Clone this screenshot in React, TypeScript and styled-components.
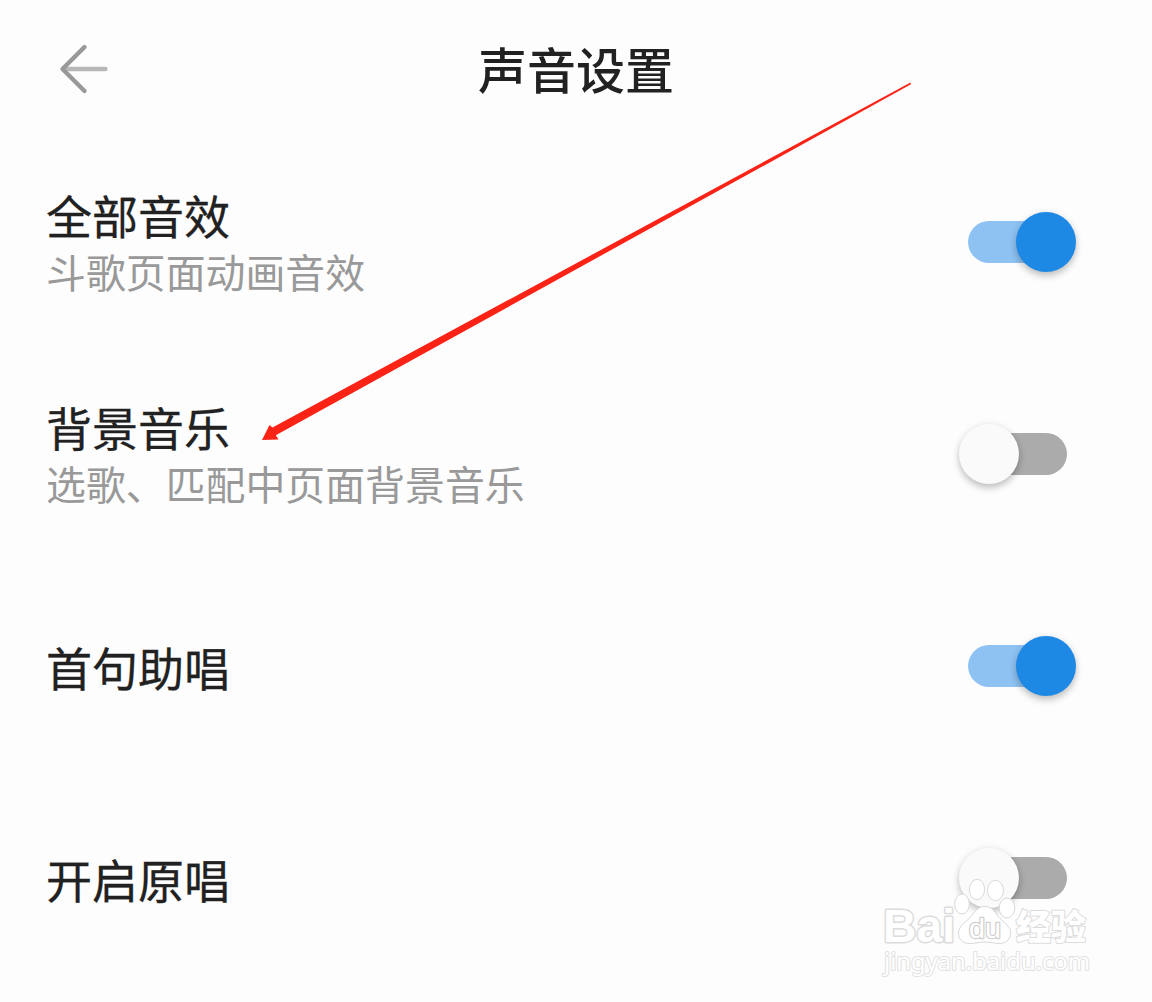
import { useState } from 'react';
import styled, { createGlobalStyle } from 'styled-components';

const GlobalStyle = createGlobalStyle`
  body {
    background: #fdfdfd;
    font-family: 'Noto Sans CJK SC', sans-serif;
    margin: 0;
  }
`;

const Page = styled.main`
  box-sizing: border-box;
  height: 1002px;
  overflow: hidden;
  position: relative;
  width: 1152px;
`;

const Header = styled.header`
  align-items: center;
  display: grid;
  grid-template-columns: 160px 1fr 160px;
  height: 136px;
`;

const BackButton = styled.button`
  background: none;
  border: 0;
  height: 60px;
  justify-self: start;
  margin: 0 0 0 54px;
  padding: 0;
  width: 60px;
`;

const Title = styled.h1`
  color: #212121;
  font-size: 49px;
  font-weight: 500;
  line-height: 72px;
  margin: 0;
  text-align: center;
`;

const Row = styled.section`
  align-items: center;
  box-sizing: border-box;
  display: flex;
  height: 212px;
  justify-content: space-between;
  padding: 0 76px 0 46px;
`;

const Labels = styled.div`
  display: flex;
  flex-direction: column;
  gap: 2px;
`;

const Name = styled.div`
  color: #212121;
  font-size: 46px;
  font-weight: 400;
  line-height: 56px;
  -webkit-text-stroke: 0.3px #212121;
`;

const Hint = styled.div`
  color: #999;
  font-size: 39.9px;
  line-height: 54px;
`;

const Track = styled.button<{ $on: boolean }>`
  align-items: center;
  background: ${(p) => (p.$on ? '#8ec2f2' : '#ababab')};
  border: 0;
  border-radius: 21px;
  display: flex;
  height: 42px;
  justify-content: ${(p) => (p.$on ? 'flex-end' : 'flex-start')};
  margin: 0 9px;
  padding: 0;
  width: 99px;
`;

const Thumb = styled.span<{ $on: boolean }>`
  background: ${(p) => (p.$on ? '#1e88e5' : '#fafafa')};
  border-radius: 50%;
  box-shadow: 0 4px 7px rgba(0, 0, 0, 0.22), 0 0 8px rgba(0, 0, 0, 0.06);
  flex: none;
  height: 60px;
  margin: 0 -9px;
  width: 60px;
`;

const Pointer = styled.svg`
  left: 0;
  pointer-events: none;
  position: absolute;
  top: 0;
`;

const Watermark = styled.svg`
  left: 876px;
  pointer-events: none;
  position: absolute;
  top: 870px;
`;

interface ISetting {
  enabled: boolean;
  hint?: string;
  name: string;
}

const initialSettings: ISetting[] = [
  { name: '全部音效', hint: '斗歌页面动画音效', enabled: true },
  { name: '背景音乐', hint: '选歌、匹配中页面背景音乐', enabled: false },
  { name: '首句助唱', enabled: true },
  { name: '开启原唱', enabled: false },
];

const BackIcon = () => (
  <svg width="60" height="60" viewBox="0 0 60 60" fill="none" strokeLinecap="round" strokeWidth="4.4">
    <path d="M10 31H51.5" stroke="#b8b8b8" />
    <path d="M30.5 9 8.5 31l22 22" stroke="#999" strokeLinejoin="round" />
  </svg>
);

const BaiduMark = () => (
  <Watermark width="230" height="115" viewBox="0 0 230 115">
    <g fill="#fff" stroke="#d8d8d8" strokeWidth="1">
      <ellipse cx="101" cy="19.5" rx="7.6" ry="10.2" />
      <ellipse cx="119.5" cy="20.5" rx="8" ry="10.2" />
      <ellipse cx="86" cy="34" rx="7.4" ry="10" />
      <ellipse cx="131" cy="38" rx="7.8" ry="10" />
      <path d="M109 36.5c-8 0-11 7-16 12-5 5-10.500 8-10.500 14.500 0 7 5 10.500 11 10.500 6 0 9-1.500 15.500-1.500s9 1.500 14 1.500c7 0 11.500-4 11.500-11 0-6-5.500-9-10.500-14-5-5-7-12-15-12Z" />
    </g>
    <g fill="#fff" stroke="#dcdcdc" paintOrder="stroke" strokeLinejoin="round">
      <text x="7" y="72" fontFamily="Liberation Sans" fontSize="46" fontWeight="700" strokeWidth="3" textLength="72" lengthAdjust="spacingAndGlyphs">Bai</text>
      <text x="93" y="68" fontFamily="Liberation Sans" fontSize="27" stroke="#cfcfcf" strokeWidth="2.4" textLength="32" lengthAdjust="spacingAndGlyphs">du</text>
      <text x="140" y="70" fontFamily="Noto Sans CJK SC" fontSize="35" fontWeight="900" strokeWidth="2">经验</text>
      <text x="8" y="100" fontFamily="Noto Sans" fontSize="23" strokeWidth="2" stroke="#e2e2e2" textLength="206" lengthAdjust="spacingAndGlyphs">jingyan.baidu.com</text>
    </g>
  </Watermark>
);

const App = () => {
  const [settings, setSettings] = useState(initialSettings);

  const toggle = (name: string) =>
    setSettings((prev) => prev.map((s) => (s.name === name ? { ...s, enabled: !s.enabled } : s)));

  return (
    <Page>
      <GlobalStyle />
      <Header>
        <BackButton>
          <BackIcon />
        </BackButton>
        <Title>声音设置</Title>
      </Header>
      {settings.map(({ name, hint, enabled }) => (
        <Row key={name}>
          <Labels>
            <Name>{name}</Name>
            {hint && <Hint>{hint}</Hint>}
          </Labels>
          <Track $on={enabled} role="switch" aria-checked={enabled} onClick={() => toggle(name)}>
            <Thumb $on={enabled} />
          </Track>
        </Row>
      ))}
      <Pointer width="1152" height="1002" viewBox="0 0 1152 1002">
        <path d="M910.5 82.5 272.5 427.5 269.5 425 262 440 278.5 439.5 275.8 435.3 911 84.3Z" fill="#fb2216" />
      </Pointer>
      <BaiduMark />
    </Page>
  );
};

export default App;
